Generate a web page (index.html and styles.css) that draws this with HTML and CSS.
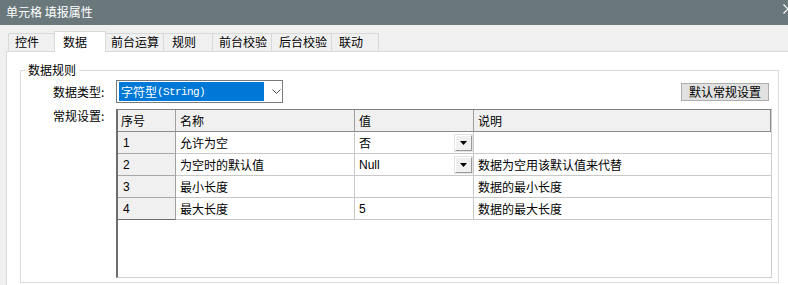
FILE: index.html
```html
<!DOCTYPE html>
<html lang="zh-CN">
<head>
<meta charset="utf-8">
<title>单元格 填报属性</title>
<link rel="stylesheet" href="styles.css">
</head>
<body>
<div class="window">
  <div class="titlebar">
    <span class="title">单元格 填报属性</span>
    <svg class="close" width="10" height="10" viewBox="0 0 10 10"><path d="M0.5 0.5 L9.5 9.5 M9.5 0.5 L0.5 9.5" stroke="#ffffff" stroke-width="1.2" fill="none"/></svg>
  </div>
  <div class="tabstrip">
    <div class="tab t1">控件</div>
    <div class="tab t2 active">数据</div>
    <div class="tab t3">前台运算</div>
    <div class="tab t4">规则</div>
    <div class="tab t5">前台校验</div>
    <div class="tab t6">后台校验</div>
    <div class="tab t7">联动</div>
  </div>
  <div class="panel">
    <div class="group">
      <span class="legend">数据规则</span>
      <div class="row row-type">
        <span class="lbl">数据类型:</span>
        <div class="combo">
          <span class="combo-sel"><span class="cjk">字符型</span><span class="mono">(String)</span></span>
          <svg class="chev" width="9" height="5" viewBox="0 0 9 5"><polyline points="0.5,0.5 4.5,4.5 8.5,0.5" fill="none" stroke="#555555" stroke-width="1"/></svg>
        </div>
        <button class="btn">默认常规设置</button>
      </div>
      <div class="row row-grid">
        <span class="lbl lbl-top">常规设置:</span>
        <div class="grid">
          <div class="gh c1">序号</div>
          <div class="gh c2">名称</div>
          <div class="gh c3">值</div>
          <div class="gh c4">说明</div>

          <div class="gc c1">1</div>
          <div class="gc c2">允许为空</div>
          <div class="gc c3 has-drop"><span>否</span><span class="drop"><svg width="7" height="4" viewBox="0 0 7 4"><polygon points="0,0 7,0 3.5,4" fill="#000"/></svg></span></div>
          <div class="gc c4"></div>

          <div class="gc c1">2</div>
          <div class="gc c2">为空时的默认值</div>
          <div class="gc c3 has-drop"><span class="latin">Null</span><span class="drop"><svg width="7" height="4" viewBox="0 0 7 4"><polygon points="0,0 7,0 3.5,4" fill="#000"/></svg></span></div>
          <div class="gc c4">数据为空用该默认值来代替</div>

          <div class="gc c1">3</div>
          <div class="gc c2">最小长度</div>
          <div class="gc c3"></div>
          <div class="gc c4">数据的最小长度</div>

          <div class="gc c1 last">4</div>
          <div class="gc c2">最大长度</div>
          <div class="gc c3"><span class="latin">5</span></div>
          <div class="gc c4">数据的最大长度</div>
        </div>
      </div>
    </div>
  </div>
</div>
</body>
</html>
```
FILE: styles.css
```css
html, body {
  margin: 0;
  padding: 0;
}
body {
  width: 788px;
  height: 285px;
  overflow: hidden;
  background: #f0f0f0;
  font-family: "Noto Sans CJK SC", "Microsoft YaHei", sans-serif;
  font-size: 12px;
  color: #000;
}
.window {
  width: 788px;
  height: 285px;
  overflow: hidden;
  display: flex;
  flex-direction: column;
}
.titlebar {
  height: 25px;
  flex: none;
  background: #6a787c;
  color: #fff;
  display: flex;
  align-items: center;
  padding-left: 6px;
  box-sizing: border-box;
}
.title {
  font-size: 12px;
  line-height: 14px;
  margin-top: -1px;
}
.close {
  margin-left: auto;
  margin-right: -5px;
  margin-top: -8px;
  flex: none;
}
.tabstrip {
  height: 26px;
  flex: none;
  display: flex;
  align-items: flex-end;
  padding-left: 8px;
  box-sizing: border-box;
}
.tab {
  height: 18px;
  box-sizing: border-box;
  border: 1px solid #d9d9d9;
  border-bottom: none;
  margin-right: -1px;
  padding-left: 6px;
  line-height: 16px;
  background: #f0f0f0;
  white-space: nowrap;
}
.tab.active {
  height: 21px;
  margin-bottom: -1px;
  background: #fff;
  position: relative;
  z-index: 1;
  padding-left: 8px;
  line-height: 19px;
}
.t1 { width: 47px; }
.t2 { width: 52px; }
.t3 { width: 59px; padding-left: 5px; }
.t4 { width: 50px; padding-left: 8px; }
.t5 { width: 60px; }
.t6 { width: 61px; padding-left: 7px; }
.t7 { width: 48px; padding-left: 7px; }

.panel {
  flex: 1;
  margin-left: 6px;
  background: #fff;
  border-top: 1px solid #d9d9d9;
  border-left: 1px solid #d9d9d9;
}
.group {
  position: relative;
  width: 759px;
  height: 213px;
  box-sizing: border-box;
  margin: 18px 0 0 13px;
  border: 1px solid #dcdcdc;
  padding: 9px 6px 4px 32px;
  display: flex;
  flex-direction: column;
}
.legend {
  position: absolute;
  left: 4px;
  top: -8px;
  background: #fff;
  padding: 0 3px;
  line-height: 14px;
}
.row {
  display: flex;
}
.row-type {
  height: 23px;
  align-items: center;
}
.lbl {
  width: 63px;
  flex: none;
  line-height: 14px;
  white-space: nowrap;
}
.lbl-top {
  padding-top: 0px;
}
.combo {
  width: 167px;
  height: 23px;
  box-sizing: border-box;
  border: 1px solid #7a7a7a;
  display: flex;
  align-items: center;
  flex: none;
}
.combo-sel {
  margin-left: 2px;
  width: 145px;
  height: 19px;
  background: #0078d7;
  color: #fff;
  display: flex;
  align-items: center;
  padding-left: 2px;
  box-sizing: border-box;
  white-space: nowrap;
}
.cjk {
  line-height: 14px;
}
.mono {
  font-family: "Liberation Mono", "DejaVu Sans Mono", monospace;
  font-size: 11px;
  letter-spacing: -0.6px;
  line-height: 14px;
}
.chev {
  margin-left: 8px;
  flex: none;
}
.btn {
  margin-left: auto;
  margin-right: 3px;
  width: 88px;
  height: 18px;
  box-sizing: border-box;
  background: #e1e1e1;
  border: 1px solid #adadad;
  padding: 0;
  font-family: "Noto Sans CJK SC", sans-serif;
  font-size: 12px;
  line-height: 14px;
  color: #000;
}
.row-grid {
  margin-top: 6px;
  flex: 1;
}
.grid {
  width: 656px;
  height: 169px;
  box-sizing: border-box;
  border-left: 2px solid #6e6e6e;
  border-top: 1px solid #828282;
  border-right: 1px solid #cfcfcf;
  border-bottom: 1px solid #cfcfcf;
  display: grid;
  grid-template-columns: 58px 179px 119px 297px;
  grid-auto-rows: 22px;
  align-content: start;
  background: #fff;
}
.gh, .gc {
  box-sizing: border-box;
  padding-left: 4px;
  display: flex;
  align-items: center;
  line-height: 14px;
  white-space: nowrap;
  overflow: hidden;
}
.gh {
  background: #f0f0f0;
  border-right: 1px solid #a0a0a0;
  border-bottom: 1px solid #8c8c8c;
}
.gh.c1 { padding-left: 3px; }
.gh.c4 { border-right-color: #8c8c8c; }
.gc {
  border-right: 1px solid #c8c8c8;
  border-bottom: 1px solid #c8c8c8;
}
.gc.c1 {
  background: #f0f0f0;
  border-right-color: #a0a0a0;
  border-bottom-color: #a8a8a8;
  padding-left: 5px;
}
.gc.c1.last {
  border-bottom-color: #6e6e6e;
}
.gc.c4 {
  border-right: none;
}
.latin {
  font-family: "Liberation Sans", "Noto Sans", sans-serif;
}
.gc.c1, .gc .latin {
  font-family: "Liberation Sans", "Noto Sans", sans-serif;
}
.has-drop {
  justify-content: space-between;
  padding-right: 1px;
}
.drop {
  width: 17px;
  height: 16px;
  box-sizing: border-box;
  background: #f0f0f0;
  border-top: 1px solid #ffffff;
  border-left: 1px solid #ffffff;
  border-right: 1px solid #9a9a9a;
  border-bottom: 1px solid #9a9a9a;
  box-shadow: 0 0 0 1px #e3e3e3;
  display: flex;
  align-items: center;
  justify-content: center;
  flex: none;
}
```
